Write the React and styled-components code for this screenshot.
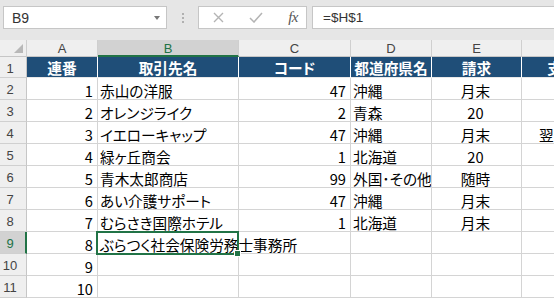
import React from "react";
import styled, { createGlobalStyle, css } from "styled-components";

const Global = createGlobalStyle`
  html, body { margin: 0; padding: 0; background: #fff; }
  body { width: 554px; height: 303px; overflow: hidden; }
  #root { width: 554px; height: 303px; overflow: hidden; }
`;

const GREEN = "#217346";
const GRID = "#d4d4d4";
const CELL_FONT = `"Noto Sans CJK JP", "Noto Sans", sans-serif`;
const UI_FONT = `"Liberation Sans", Arial, sans-serif`;

const Page = styled.div`
  width: 554px;
  height: 303px;
  overflow: hidden;
  display: flex;
  flex-direction: column;
  background: #fff;
`;

const FormulaBar = styled.div`
  height: 40px;
  flex: none;
  background: #e6e6e6;
  display: flex;
  align-items: flex-start;
  padding-top: 6px;
  box-sizing: border-box;
`;

const Box = styled.div`
  height: 23px;
  box-sizing: border-box;
  background: #fff;
  border: 1px solid #c6c6c6;
  display: flex;
  align-items: center;
  font-family: ${UI_FONT};
  font-size: 14px;
  color: #333;
`;

const NameBox = styled(Box)`
  width: 164px;
  margin-left: 3px;
  padding: 0 6px 0 8px;
  justify-content: space-between;
`;

const Arrow = styled.span`
  width: 0;
  height: 0;
  border-left: 3.5px solid transparent;
  border-right: 3.5px solid transparent;
  border-top: 4px solid #777;
`;

const Sep = styled.div`
  width: 31px;
  height: 23px;
  display: flex;
  flex-direction: column;
  align-items: center;
  justify-content: center;
  gap: 2px;
`;

const Dot = styled.span`
  width: 2px;
  height: 2px;
  background: #b0b0b0;
`;

const FxGroup = styled(Box)`
  width: 109px;
  padding: 0 8px 0 14px;
  justify-content: space-between;
`;

const Fx = styled.span`
  font-family: "Liberation Serif", "Times New Roman", serif;
  font-style: italic;
  font-size: 15px;
  color: #555;
  letter-spacing: -0.5px;
`;

const FormulaBox = styled(Box)`
  flex: 1;
  margin-left: 5px;
  border-right: none;
  padding-left: 10px;
  font-size: 13.5px;
`;

const Sheet = styled.div`
  display: grid;
  grid-template-columns: 27px 71px 141px 112px 81px 90px 81px;
  grid-template-rows: 17px 21px repeat(10, 22px);
  width: 603px;
`;

const ColHead = styled.div`
  box-sizing: border-box;
  background: ${(p) => (p.$sel ? "#d2d2d2" : "#efefef")};
  color: ${(p) => (p.$sel ? GREEN : "#444")};
  border-right: 1px solid #cfcfcf;
  border-bottom: ${(p) => (p.$sel ? `2px solid ${GREEN}` : "1px solid #c6c6c6")};
  font-family: ${UI_FONT};
  font-size: 13px;
  display: flex;
  align-items: center;
  justify-content: center;
  padding-top: 1px;
`;

const Corner = styled(ColHead)`
  position: relative;
  &::after {
    content: "";
    position: absolute;
    right: 3px;
    bottom: 3px;
    width: 0;
    height: 0;
    border-left: 9px solid transparent;
    border-bottom: 9px solid #b8b8b8;
  }
`;

const RowHead = styled.div`
  box-sizing: border-box;
  background: ${(p) => (p.$sel ? "#d2d2d2" : "#efefef")};
  color: ${(p) => (p.$sel ? GREEN : "#444")};
  border-right: ${(p) => (p.$sel ? `2px solid ${GREEN}` : "1px solid #c6c6c6")};
  border-bottom: 1px solid #d0d0d0;
  font-family: ${UI_FONT};
  font-size: 13px;
  display: flex;
  align-items: center;
  justify-content: center;
  padding: 2px ${(p) => (p.$sel ? 5 : 6)}px 0 0;
`;

const Cell = styled.div`
  box-sizing: border-box;
  border-right: 1px solid ${GRID};
  border-bottom: 1px solid ${GRID};
  font-family: ${CELL_FONT};
  font-feature-settings: "palt";
  font-size: 14.67px;
  color: #000;
  display: flex;
  align-items: center;
  padding: 3px 4px 0 2px;
  white-space: nowrap;
  overflow: ${(p) => (p.$spill ? "visible" : "hidden")};
  justify-content: ${(p) =>
    p.$align === "right" ? "flex-end" : p.$align === "center" ? "center" : "flex-start"};
  ${(p) =>
    p.$spill &&
    css`
      position: relative;
      z-index: 2;
    `}
`;

const HeadCell = styled(Cell)`
  background: #1f4e78;
  color: #fff;
  font-weight: 700;
  border-right: 1px solid #fff;
  border-bottom: 1px solid #e8e8e8;
  justify-content: center;
  padding: 1px 0 0 0;
`;

const Selection = styled.div`
  position: absolute;
  left: -2px;
  top: -1px;
  right: -1px;
  bottom: -2px;
  border: 2px solid ${GREEN};
  pointer-events: none;
`;

const Handle = styled.div`
  position: absolute;
  right: -4px;
  bottom: -4px;
  width: 5px;
  height: 5px;
  background: ${GREEN};
  border: 1px solid #fff;
`;

const cols = ["A", "B", "C", "D", "E", "F"];
const headers = ["連番", "取引先名", "コード", "都道府県名", "請求", "支払"];
const rows = [
  [1, "赤山の洋服", 47, "沖縄", "月末", ""],
  [2, "オレンジライク", 2, "青森", "20", ""],
  [3, "イエローキャップ", 47, "沖縄", "月末", "翌月末"],
  [4, "緑ヶ丘商会", 1, "北海道", "20", ""],
  [5, "青木太郎商店", 99, "外国･その他", "随時", ""],
  [6, "あい介護サポート", 47, "沖縄", "月末", ""],
  [7, "むらさき国際ホテル", 1, "北海道", "月末", ""],
  [8, "ぶらつく社会保険労務士事務所", "", "", "", ""],
  [9, "", "", "", "", ""],
  [10, "", "", "", "", ""],
];

function XIcon() {
  return (
    <svg width="11" height="11" viewBox="0 0 11 11">
      <path d="M1 1 L10 10 M10 1 L1 10" stroke="#b4b4b4" strokeWidth="1.4" />
    </svg>
  );
}

function CheckIcon() {
  return (
    <svg width="14" height="11" viewBox="0 0 14 11">
      <path d="M1 6 L5 10 L13 1" stroke="#b4b4b4" strokeWidth="1.5" fill="none" />
    </svg>
  );
}

export default function App() {
  return (
    <Page>
      <Global />
      <FormulaBar>
        <NameBox>
          <span>B9</span>
          <Arrow />
        </NameBox>
        <Sep>
          <Dot />
          <Dot />
          <Dot />
        </Sep>
        <FxGroup>
          <XIcon />
          <CheckIcon />
          <Fx>fx</Fx>
        </FxGroup>
        <FormulaBox>=$H$1</FormulaBox>
      </FormulaBar>
      <Sheet>
        <Corner />
        {cols.map((c) => (
          <ColHead key={c} $sel={c === "B"}>
            {c}
          </ColHead>
        ))}
        <RowHead>1</RowHead>
        {headers.map((h) => (
          <HeadCell key={h}>{h}</HeadCell>
        ))}
        {rows.map((r, i) => {
          const rowNum = i + 2;
          const sel = rowNum === 9;
          return (
            <React.Fragment key={rowNum}>
              <RowHead $sel={sel}>{rowNum}</RowHead>
              <Cell $align="right">{r[0]}</Cell>
              <Cell $spill={sel}>
                {r[1]}
                {sel && (
                  <Selection>
                    <Handle />
                  </Selection>
                )}
              </Cell>
              <Cell $align="right">{r[2]}</Cell>
              <Cell>{r[3]}</Cell>
              <Cell $align="center">{r[4]}</Cell>
              <Cell $align="center">{r[5]}</Cell>
            </React.Fragment>
          );
        })}
      </Sheet>
    </Page>
  );
}
